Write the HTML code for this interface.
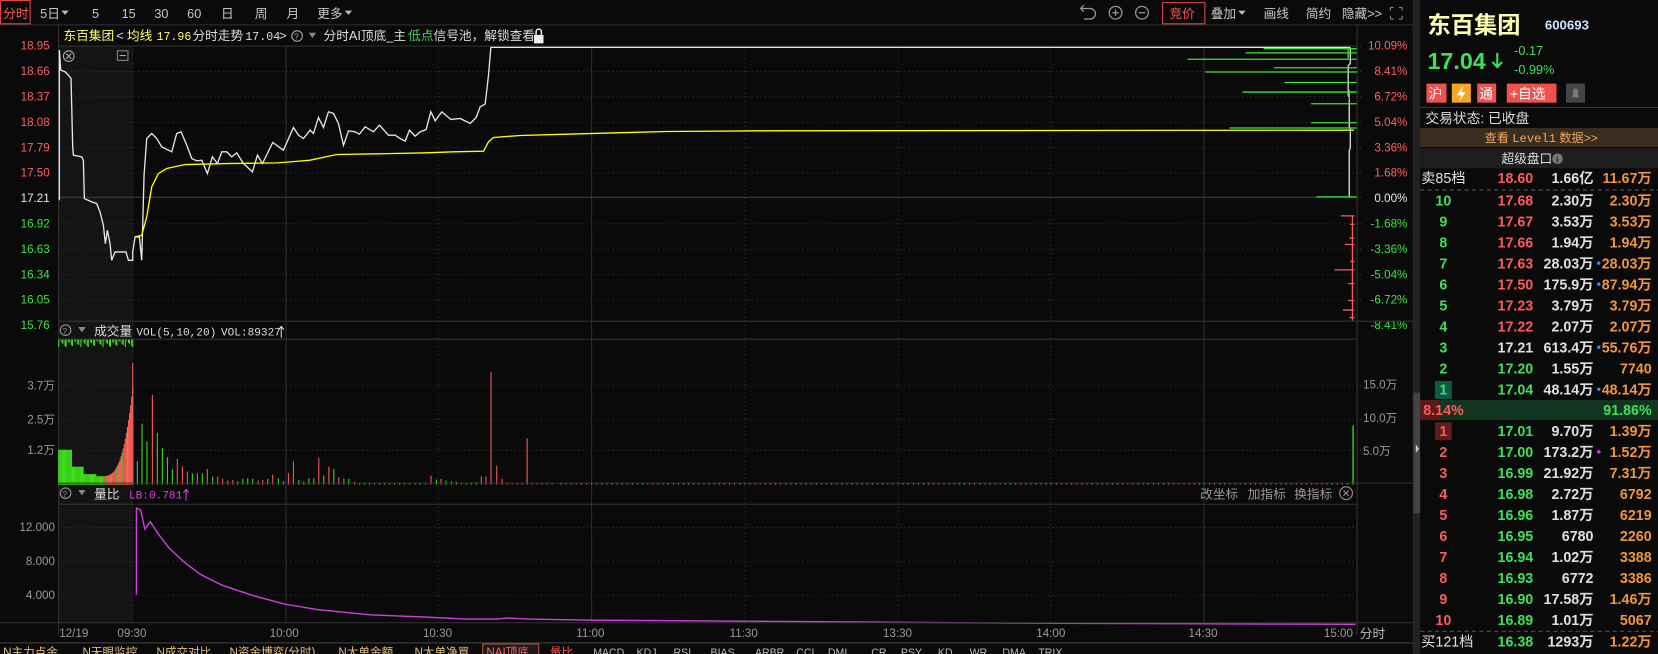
<!DOCTYPE html>
<html><head><meta charset="utf-8"><style>
html,body{margin:0;padding:0;background:#0a0a0a;overflow:hidden}
svg{display:block}
text{font-family:"Liberation Sans","Noto Sans CJK SC",sans-serif}
.m{font-family:"Liberation Mono","Noto Sans CJK SC",monospace}
</style></head><body>
<svg xmlns="http://www.w3.org/2000/svg" width="1658" height="654" viewBox="0 0 1568 618" preserveAspectRatio="none">
<rect width="1568" height="618" fill="#0a0a0a"/>
<rect x="55" y="43" width="71" height="546" fill="#141414"/>
<line x1="0" y1="23.5" x2="1337" y2="23.5" stroke="#333"/>
<rect x="0.5" y="0.5" width="28" height="22" fill="none" stroke="#e04848"/>
<g font-size="12" fill="#c8c8c8">
<text x="3" y="17" fill="#ff5a5a">分时</text>
<text x="38" y="17">5日</text><path d="M58 10h7l-3.5 4z" fill="#bbb"/>
<text x="87" y="17">5</text><text x="115" y="17">15</text><text x="146" y="17">30</text><text x="177" y="17">60</text>
<text x="209" y="17">日</text><text x="241" y="17">周</text><text x="271" y="17">月</text>
<text x="300" y="17">更多</text><path d="M326 10h7l-3.5 4z" fill="#bbb"/>
</g>
<g stroke="#999" fill="none" stroke-width="1.2">
<path d="M1023 8h8a5 5 0 0 1 0 10h-6"/><path d="M1025 5l-3 3 3 3"/>
<circle cx="1055" cy="12" r="6"/><path d="M1052 12h6M1055 9v6"/>
<circle cx="1080" cy="12" r="6"/><path d="M1077 12h6"/>
</g>
<rect x="1099.5" y="2.5" width="40" height="20" fill="none" stroke="#e04848"/>
<g font-size="12" fill="#c8c8c8">
<text x="1106" y="17" fill="#ff5a5a">竞价</text>
<text x="1145" y="17">叠加</text><path d="M1171 10h7l-3.5 4z" fill="#bbb"/>
<text x="1195" y="17">画线</text><text x="1235" y="17">简约</text><text x="1269" y="17">隐藏&gt;&gt;</text>
</g>
<g stroke="#888" fill="none"><path d="M1315 7h3M1315 7v3M1326 7h-3M1326 7v3M1315 18h3M1315 18v-3M1326 18h-3M1326 18v-3"/></g>
<g font-size="12">
<text x="60" y="38" fill="#ffff66">东百集团</text>
<text x="110" y="38" fill="#ddd">&lt;</text>
<text x="120" y="38" fill="#ffff66">均线</text>
<text x="148" y="38" fill="#ffff66" class="m" font-size="11">17.96</text>
<text x="182" y="38" fill="#ddd">分时走势</text>
<text x="232" y="38" fill="#ddd" class="m" font-size="11">17.04</text>
<text x="264" y="38" fill="#ddd">&gt;</text>
<circle cx="281" cy="34" r="5" fill="none" stroke="#aaa"/><text x="278" y="37.5" font-size="8" fill="#aaa">?</text>
<path d="M292 31h7l-3.5 5z" fill="#888"/>
<text x="306" y="38" fill="#ddd">分时AI顶底_主</text>
<text x="386" y="38" fill="#3ddc5a">低点</text>
<text x="410" y="38" fill="#ddd">信号池，解锁查看</text>
</g>
<rect x="505" y="33" width="9" height="8" fill="#eee"/><path d="M507 33v-3a2.5 2.5 0 0 1 5 0v3" stroke="#eee" fill="none" stroke-width="1.4"/>
<line x1="55" y1="43.5" x2="1283" y2="43.5" stroke="#2c2c2c"/>
<line x1="55.5" y1="24" x2="55.5" y2="600" stroke="#333"/>
<line x1="1283.5" y1="24" x2="1283.5" y2="600" stroke="#333"/>
<line x1="1336.5" y1="0" x2="1336.5" y2="618" stroke="#333"/>
<g stroke="#333" stroke-dasharray="1,3">
<path d="M55 43.5H1283M55 67.5H1283M55 91.5H1283M55 115.5H1283M55 139.5H1283M55 163.5H1283M55 211.5H1283M55 235.5H1283M55 259.5H1283M55 283.5H1283"/>
<path d="M55 364.5H1283M55 396.5H1283M55 425.5H1283"/>
<path d="M55 498.5H1283M55 530.5H1283M55 562.5H1283"/>
<path d="M125.5 43V589M414.5 43V589M704.5 43V589M849.5 43V589M993.5 43V589"/>
</g>
<g stroke="#2e2e2e"><path d="M270.5 43V589M559.5 43V589M1138.5 43V589"/></g>
<line x1="55" y1="186.5" x2="1283" y2="186.5" stroke="#333" stroke-width="1.5"/>
<g stroke="#aaa" fill="none"><circle cx="65" cy="53" r="5"/><path d="M62.5 50.5l5 5M67.5 50.5l-5 5"/></g>
<rect x="111" y="48" width="10" height="9" fill="none" stroke="#888"/><path d="M113 52.5h6" stroke="#aaa"/>
<g class="m" font-size="11" text-anchor="end">
<g fill="#ff6060"><text x="47" y="47">18.95</text><text x="47" y="71">18.66</text><text x="47" y="95">18.37</text><text x="47" y="119">18.08</text><text x="47" y="143">17.79</text><text x="47" y="167">17.50</text></g>
<text x="47" y="191" fill="#e8e8e8">17.21</text>
<g fill="#3ce43c"><text x="47" y="215">16.92</text><text x="47" y="239">16.63</text><text x="47" y="263">16.34</text><text x="47" y="287">16.05</text><text x="47" y="311">15.76</text></g>
<g fill="#999"><text x="52" y="368">3.7万</text><text x="52" y="400">2.5万</text><text x="52" y="429">1.2万</text>
<text x="52" y="502">12.000</text><text x="52" y="534">8.000</text><text x="52" y="566">4.000</text></g>
</g>
<g class="m" font-size="11" text-anchor="end">
<g fill="#ff6060"><text x="1331" y="47">10.09%</text><text x="1331" y="71">8.41%</text><text x="1331" y="95">6.72%</text><text x="1331" y="119">5.04%</text><text x="1331" y="143">3.36%</text><text x="1331" y="167">1.68%</text></g>
<text x="1331" y="191" fill="#e8e8e8">0.00%</text>
<g fill="#3ce43c"><text x="1331" y="215">-1.68%</text><text x="1331" y="239">-3.36%</text><text x="1331" y="263">-5.04%</text><text x="1331" y="287">-6.72%</text><text x="1331" y="311">-8.41%</text></g>
<g fill="#999" text-anchor="start"><text x="1289" y="367">15.0万</text><text x="1289" y="399">10.0万</text><text x="1289" y="430">5.0万</text></g>
</g>
<g stroke="#444" stroke-dasharray="1,2"><path d="M1283 43.5h5M1283 67.5h5M1283 91.5h5M1283 115.5h5M1283 139.5h5M1283 163.5h5M1283 186.5h5M1283 211.5h5M1283 235.5h5M1283 259.5h5M1283 283.5h5M1283 364.5h5M1283 396.5h5M1283 425.5h5"/></g>
<g transform="translate(0,28.38) scale(0.31536)" fill="none">
<polyline stroke="#e6e6e6" stroke-width="4" points="178,510 178,60 182,120 195,125 205,135 213,145 218,350 220,375 245,380 250,390 253,505 275,515 290,520 300,545 310,585 316,640 322,600 330,640 335,690 345,665 378,665 385,690 398,690 398,665 405,620 418,620 425,690 432,435 440,325 455,310 470,325 485,350 515,365 530,310 543,305 560,345 575,385 590,392 605,390 622,430 637,380 652,400 665,365 680,365 695,380 710,368 730,400 757,425 772,375 787,400 818,337 850,360 880,292 895,315 910,325 930,300 940,310 955,262 970,292 985,245 1000,250 1015,280 1030,345 1045,302 1065,305 1078,312 1095,290 1120,305 1138,285 1165,315 1185,315 1200,325 1215,333 1228,300 1245,318 1260,305 1278,298 1292,245 1305,272 1325,245 1352,268 1380,265 1410,280 1428,262 1440,230 1455,222 1465,135 1472,52 4050,52"/>
<polyline stroke="#ffff00" stroke-width="4" points="405,620 425,615 440,560 455,470 475,430 500,415 555,403 680,400 830,398 870,395 930,390 1010,373 1130,371 1280,368 1360,365 1450,363 1465,335 1480,322 1560,316 1700,312 2000,304 2300,302 4060,300"/>
</g>
<polyline fill="none" stroke="#e6e6e6" stroke-width="1.2" points="1277,45 1277,60 1275,62 1275,90 1276,92 1276,120 1277,122 1277,140 1276,142 1276,186"/>
<g stroke="#3ce43c" stroke-width="1.2"><path d="M1195 46H1283M1123 56H1283M1178 50H1283M1140 68H1283M1205 64H1283M1215 78H1283M1175 87H1283M1240 98H1283M1240 116H1283M1163 121H1283M1245 186H1283M1275 45v10M1276 85v10"/></g>
<g stroke="#ff5a5a" stroke-width="1.2"><path d="M1279 204V303M1268 204H1281M1277 212H1281M1276 225H1281M1272 231H1281M1277 247H1281M1262 255H1281M1275 268H1281M1275 284H1281M1270 293H1281M1276 300H1281"/></g>
<line x1="55" y1="303.5" x2="1336" y2="303.5" stroke="#333"/>
<line x1="55" y1="320.5" x2="1283" y2="320.5" stroke="#333"/>
<circle cx="62" cy="312" r="5" fill="none" stroke="#999"/><text x="59" y="315.5" font-size="8" fill="#999">?</text>
<path d="M74 309h7l-3.5 5z" fill="#888"/>
<text x="89" y="317" font-size="12" fill="#ddd">成交量</text>
<text x="129" y="317" font-size="10.5" fill="#ddd" class="m">VOL(5,10,20)</text>
<text x="209" y="317" font-size="10.5" fill="#ddd" class="m">VOL:89327</text>
<path d="M266 319v-10M263.5 311.5l2.5-3 2.5 3" stroke="#ddd" fill="none"/>
<g id="vol"></g>
<line x1="55" y1="456.5" x2="1336" y2="456.5" stroke="#333"/>
<line x1="55" y1="476.5" x2="1283" y2="476.5" stroke="#333"/>
<circle cx="62" cy="466" r="5" fill="none" stroke="#999"/><text x="59" y="469.5" font-size="8" fill="#999">?</text>
<path d="M74 463h7l-3.5 5z" fill="#888"/>
<text x="89" y="471" font-size="12" fill="#ddd">量比</text>
<text x="122" y="471" font-size="10.5" fill="#e040e0" class="m">LB:0.781</text>
<path d="M176 473v-10M173.5 465.5l2.5-3 2.5 3" stroke="#e040e0" fill="none"/>
<g font-size="12" fill="#999"><text x="1135" y="471">改坐标</text><text x="1180" y="471">加指标</text><text x="1224" y="471">换指标</text></g>
<circle cx="1273" cy="466" r="6" fill="none" stroke="#999"/><path d="M1270.5 463.5l5 5M1275.5 463.5l-5 5" stroke="#999"/>
<polyline fill="none" stroke="#d040e0" stroke-width="1.3" points="129,562 129,480 133,482 137,500 142,493 150,505 160,518 175,532 190,543 210,553 240,563 270,571 300,576 350,581 400,583 440,585 470,585 480,584 500,585 560,586 700,587 850,588 1000,589 1282,590"/>
<line x1="0" y1="588.5" x2="1336" y2="588.5" stroke="#333"/>
<g class="m" font-size="11" fill="#999">
<text x="56" y="602">12/19</text><text x="111" y="602">09:30</text><text x="255" y="602">10:00</text><text x="400" y="602">10:30</text><text x="545" y="602">11:00</text><text x="690" y="602">11:30</text><text x="835" y="602">13:30</text><text x="980" y="602">14:00</text><text x="1124" y="602">14:30</text><text x="1252" y="602">15:00</text></g>
<text x="1286" y="603" font-size="12" fill="#bbb">分时</text>
<line x1="0" y1="607.5" x2="1336" y2="607.5" stroke="#444"/>
<rect x="456.5" y="608.5" width="53" height="12" fill="#1a1a1a" stroke="#b05a30"/>
<g font-size="11" fill="#e8c080">
<text x="3" y="620">N主力点金</text><text x="78" y="620">N天眼监控</text><text x="148" y="620">N成交对比</text><text x="217" y="620">N资金博弈(分时)</text><text x="320" y="620">N大单金额</text><text x="392" y="620">N大单净買</text><text x="460" y="620" fill="#ff6060">NAI顶底</text><text x="520" y="620" fill="#ff5a5a">量比</text>
</g>
<g font-size="10" fill="#bbb" class="m"><text x="561" y="620">MACD</text><text x="602" y="620">KDJ</text><text x="637" y="620">RSI</text><text x="672" y="620">BIAS</text><text x="714" y="620">ARBR</text><text x="753" y="620">CCI</text><text x="783" y="620">DMI</text><text x="824" y="620">CR</text><text x="852" y="620">PSY</text><text x="887" y="620">KD</text><text x="917" y="620">WR</text><text x="948" y="620">DMA</text><text x="982" y="620">TRIX</text></g>
<rect x="1337" y="0" width="6" height="618" fill="#222"/>
<rect x="1337" y="371" width="6" height="114" fill="#444"/>
<path d="M1339 420l3 4-3 4z" fill="#ccc"/>
<text x="1350" y="31" font-size="22" fill="#ffffb0" font-weight="bold">东百集团</text>
<text x="1461" y="28" font-size="12.5" fill="#cfe4ff" font-weight="bold">600693</text>
<text x="1350" y="65" font-size="22" fill="#3ee05a" font-weight="bold">17.04</text>
<path d="M1416 50v13M1411.5 58.5l4.5 5 4.5-5" stroke="#3ee05a" stroke-width="2" fill="none"/>
<text x="1432" y="52" font-size="12" fill="#3ee05a">-0.17</text>
<text x="1432" y="70" font-size="12" fill="#3ee05a">-0.99%</text>
<rect x="1349" y="79" width="19" height="18" fill="#ef5050"/><text x="1351" y="93" font-size="13" fill="#fff">沪</text>
<rect x="1373" y="79" width="18" height="18" fill="#f5a623"/><path d="M1384 81l-6 9h4l-2 6 6-9h-4z" fill="#fff"/>
<rect x="1397" y="79" width="18" height="18" fill="#ef5050"/><text x="1399" y="93" font-size="13" fill="#fff">通</text>
<rect x="1425" y="79" width="47" height="18" fill="#ef5050"/><text x="1428" y="93" font-size="13" fill="#fff">+自选</text>
<rect x="1481" y="79" width="18" height="18" fill="#444"/><path d="M1486 92h8l-1.5-2v-4a2.5 2.5 0 0 0-5 0v4z" fill="#777"/>
<line x1="1343" y1="101.5" x2="1568" y2="101.5" stroke="#333"/>
<text x="1348" y="116" font-size="13" fill="#ddd">交易状态: 已收盘</text>
<rect x="1343" y="121" width="225" height="18" fill="#3a2e21"/>
<text x="1404" y="134" font-size="11.5" fill="#f0a860">查看 <tspan class="m">Level1</tspan> 数据&gt;&gt;</text>
<rect x="1343" y="140" width="225" height="19" fill="#1e1e1e"/>
<text x="1420" y="154" font-size="12" fill="#ddd">超级盘口</text>
<circle cx="1473" cy="150" r="5" fill="#777"/><text x="1471.5" y="153.5" font-size="8" fill="#222" font-weight="bold">i</text>
<g font-size="13.5" font-weight="bold">
<text x="1344" y="173" fill="#e0e0e0" font-weight="normal">卖85档</text>
<text x="1450" y="173" text-anchor="end" fill="#ff5a5a">18.60</text>
<text x="1507" y="173" text-anchor="end" fill="#e0e0e0">1.66亿</text>
<text x="1562" y="173" text-anchor="end" fill="#f0963c">11.67万</text>
</g>
<line x1="1343" y1="179.5" x2="1568" y2="179.5" stroke="#555" stroke-dasharray="4,3"/>
<rect x="1357" y="360" width="16" height="17" fill="#0e5a44"/>
<rect x="1343" y="378" width="225" height="19" fill="#133520"/>
<rect x="1343" y="378" width="18" height="19" fill="#5a1a1a"/>
<text x="1346" y="392" font-size="13.5" font-weight="bold" fill="#ff5a5a">8.14%</text>
<text x="1562" y="392" font-size="13.5" font-weight="bold" fill="#3ee05a" text-anchor="end">91.86%</text>
<rect x="1357" y="399" width="16" height="17" fill="#5a1e1e"/>
<g id="ob" font-size="13.5" font-weight="bold"></g>
<line x1="1343" y1="596.5" x2="1568" y2="596.5" stroke="#555" stroke-dasharray="4,3"/>
<g font-size="13.5" font-weight="bold">
<text x="1344" y="611" fill="#e0e0e0" font-weight="normal">买121档</text>
<text x="1450" y="611" text-anchor="end" fill="#3ee05a">16.38</text>
<text x="1507" y="611" text-anchor="end" fill="#e0e0e0">1293万</text>
<text x="1562" y="611" text-anchor="end" fill="#f0963c">1.22万</text>
</g>
</svg>
<script>
(function(){
var NS="http://www.w3.org/2000/svg";
function el(p,t,a,txt){var e=document.createElementNS(NS,t);for(var k in a)e.setAttribute(k,a[k]);if(txt!=null)e.textContent=txt;p.appendChild(e);return e;}
var vol=document.getElementById("vol");
var G="#3ee01a",R="#ff5a5a",base=458;
function vy(zy){return (290+zy/3)/1.057;}
for(var x=55;x<126;x++){var tp;
 if(x<68)tp=425;else if(x<79)tp=441;else if(x<91)tp=448;else if(x<98)tp=450;
 else {var t=(x-98)/27;tp=450-Math.pow(t,3)*80-t*4;}
 var c=(x<98||x%5==0)?G:R;
 el(vol,"rect",{x:x,y:tp.toFixed(1),width:1.05,height:(base-tp).toFixed(1),fill:c});
 if(x%3!=0) el(vol,"rect",{x:x,y:321,width:1,height:(x%7)+1,fill:G});
}
el(vol,"rect",{x:125,y:343,width:1,height:base-343,fill:R});
var d=[[383,G,512],[396,G,400],[410,G,453],[425,R,313],[439,G,427],[453,G,473],[467,G,500],[481,G,537],[495,R,505],[509,R,528],[523,R,543],[537,G,548],[551,R,548],[565,G,548],[579,R,535],[594,G,558],[608,R,558],[622,R,565],[636,G,570],[650,R,568],[664,G,572],[678,G,565],[692,G,563],[706,G,565],[721,R,570],[734,R,568],[748,G,565],[762,R,552],[778,G,563],[792,G,572],[806,R,548],[820,R,513],[835,G,568],[849,G,573],[863,G,563],[877,G,563],[891,R,502],[905,G,555],[919,R,528],[933,G,535],[947,R,560],[961,G,565],[975,G,565],[991,R,573],[1005,R,577],[1019,G,577],[1033,G,575],[1047,R,577],[1061,G,578],[1075,G,578],[1089,R,578],[1103,G,578],[1117,G,578],[1131,G,578],[1145,R,579],[1160,G,579],[1175,G,578],[1190,R,577],[1205,R,555],[1220,G,567],[1233,R,565],[1247,G,570],[1262,R,572],[1276,G,573],[1290,R,577],[1304,G,578],[1318,R,575],[1332,G,575],[1346,R,558],[1359,R,558],[1373,R,245],[1389,R,525],[1404,R,565],[1418,R,577],[1432,R,577],[1446,R,577],[1460,R,577],[1474,R,443],[1488,R,579],[1502,R,579],[1516,R,579],[1530,R,579],[1544,R,579]];
d.forEach(function(b){var y=vy(b[2]);el(vol,"rect",{x:(b[0]/2.96).toFixed(1),y:y.toFixed(1),width:1,height:(base-y).toFixed(1),fill:b[1]});});
for(var x=530;x<1278;x+=4.83){el(vol,"rect",{x:x.toFixed(1),y:456.5,width:1,height:1.5,fill:((x*7|0)%5==0)?G:R});}
el(vol,"rect",{x:1279,y:402,width:1.2,height:base-402,fill:G});
var ob=document.getElementById("ob");
var sell=[["10","17.68","2.30万","2.30万",0],["9","17.67","3.53万","3.53万",0],["8","17.66","1.94万","1.94万",0],["7","17.63","28.03万","28.03万",1],["6","17.50","175.9万","87.94万",1],["5","17.23","3.79万","3.79万",0],["4","17.22","2.07万","2.07万",0],["3","17.21","613.4万","55.76万",1],["2","17.20","1.55万","7740",0],["1","17.04","48.14万","48.14万",1]];
var buy=[["1","17.01","9.70万","1.39万",0],["2","17.00","173.2万","1.52万",2],["3","16.99","21.92万","7.31万",0],["4","16.98","2.72万","6792",0],["5","16.96","1.87万","6219",0],["6","16.95","6780","2260",0],["7","16.94","1.02万","3388",0],["8","16.93","6772","3386",0],["9","16.90","17.58万","1.46万",0],["10","16.89","1.01万","5067",0]];
function row(r,y,lc){
 el(ob,"text",{x:1365,y:y,"text-anchor":"middle",fill:lc},r[0]);
 var pc=r[1]=="17.21"?"#e0e0e0":(parseFloat(r[1])>17.21?R:"#3ee05a");
 el(ob,"text",{x:1450,y:y,"text-anchor":"end",fill:pc},r[1]);
 el(ob,"text",{x:1507,y:y,"text-anchor":"end",fill:"#e0e0e0"},r[2]);
 el(ob,"text",{x:1562,y:y,"text-anchor":"end",fill:"#f0963c"},r[3]);
 if(r[4]==1)el(ob,"circle",{cx:1512,cy:y-5,r:1.6,fill:"#3c8cff"});
 if(r[4]==2)el(ob,"rect",{x:1510.5,y:y-6.5,width:3,height:3,fill:"#d040e0",transform:"rotate(45 1512 "+(y-5)+")"});
}
sell.forEach(function(r,i){row(r,194+i*19.87,"#3ee05a");});
buy.forEach(function(r,i){row(r,412+i*19.87,R);});
})();
</script>
</body></html>
